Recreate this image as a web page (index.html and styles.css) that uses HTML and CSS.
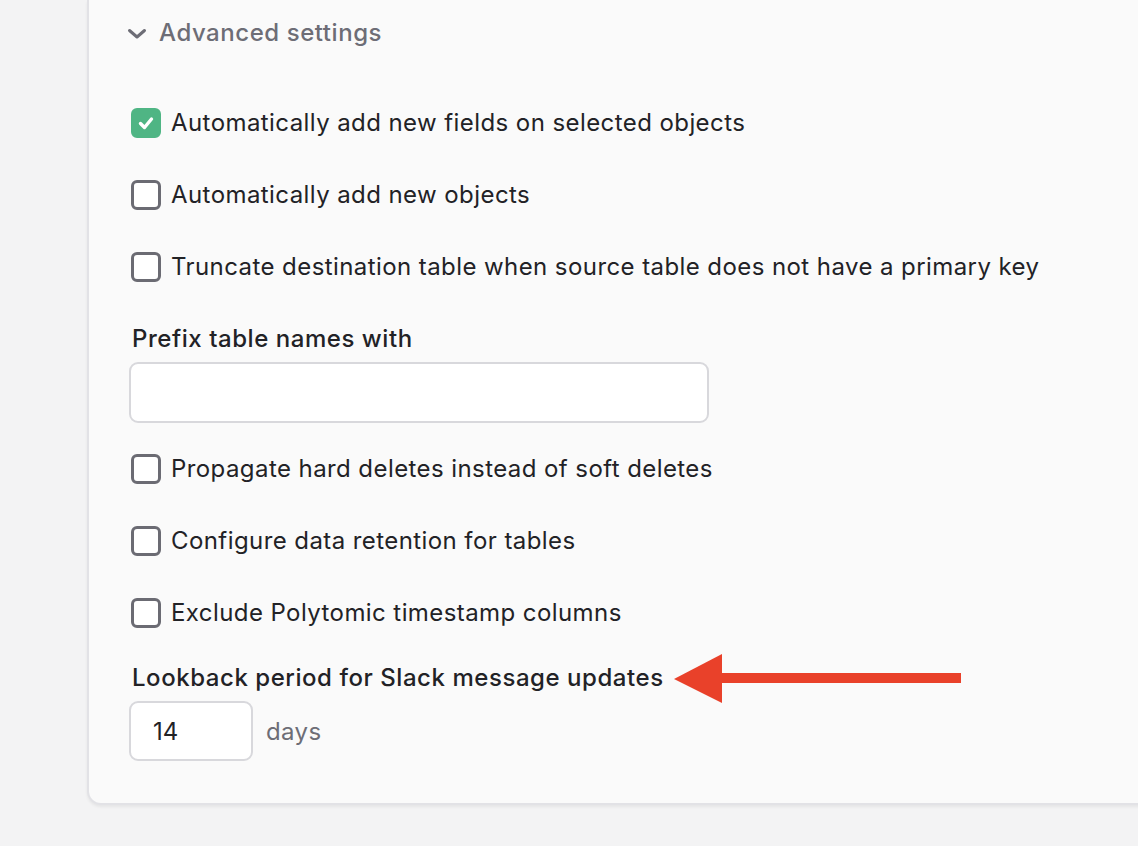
FILE: index.html
```html
<!DOCTYPE html>
<html lang="en">

<head>
    <meta charset="UTF-8" />
    <meta name="viewport" content="width=device-width, initial-scale=1.0" />
    <title>Advanced settings</title>
    <link rel="stylesheet" href="styles.css">
</head>

<body>
    <div class="panel">
        <button class="toggle">
            <svg class="chevron" width="20" height="12" viewBox="0 0 20 12">
                <path d="M2.5 2.5 L10 9 L17.5 2.5" fill="none" stroke="currentColor" stroke-width="3" stroke-linecap="round" stroke-linejoin="round" />
            </svg>
            <span>Advanced settings</span>
        </button>

        <div class="options">
            <label class="check">
                <span class="box checked">
                    <svg width="20" height="20" viewBox="0 0 20 20">
                        <path d="M4.5 10.5 L8.5 14.5 L15.5 6" fill="none" stroke="#fff" stroke-width="3.4" stroke-linecap="round" stroke-linejoin="round" />
                    </svg>
                </span>
                Automatically add new fields on selected objects
            </label>
            <label class="check"><span class="box"></span>Automatically add new objects</label>
            <label class="check"><span class="box"></span>Truncate destination table when source table does not have a primary key</label>

            <div class="field">
                <div class="field-label">Prefix table names with</div>
                <input class="text-input wide" type="text" />
            </div>

            <label class="check"><span class="box"></span>Propagate hard deletes instead of soft deletes</label>
            <label class="check"><span class="box"></span>Configure data retention for tables</label>
            <label class="check"><span class="box"></span>Exclude Polytomic timestamp columns</label>

            <div class="field lookback">
                <div class="field-label">Lookback period for Slack message updates</div>
                <div class="inline">
                    <input class="text-input short" type="text" value="14" />
                    <span class="unit">days</span>
                </div>
            </div>
        </div>
    </div>

    <!-- annotation arrow -->
    <svg class="arrow" width="300" height="60" viewBox="0 0 300 60">
        <polygon points="1,25 49,0 49,49" fill="#e9412a" />
        <rect x="47" y="19" width="241" height="10" fill="#e9412a" />
    </svg>
</body>

</html>
```

FILE: styles.css
```css
body {
    margin: 0;
    background: #f3f3f4;
    font-family: Inter, 'Noto Sans', sans-serif;
    color: #222226;
    overflow: hidden;
    height: 846px;
    position: relative;
}

.panel {
    margin-left: 87px;
    margin-right: -20px;
    background: #fafafa;
    border: 2px solid #e2e2e6;
    border-top: none;
    border-radius: 0 0 0 14px;
    padding: 15px 0 50px 40px;
    box-shadow: 0 2px 3px rgba(0, 0, 0, 0.06);
}

.toggle {
    display: flex;
    align-items: center;
    gap: 12px;
    background: none;
    border: none;
    padding: 0;
    margin-left: -2px;
    font-family: inherit;
    font-size: 24px;
    font-weight: 500;
    letter-spacing: 0.55px;
    line-height: 36px;
    color: #6d6d76;
}

.chevron {
    margin-top: 1px;
}

.options {
    display: flex;
    flex-direction: column;
    gap: 36px;
    margin-top: 54px;
}

.check {
    display: flex;
    align-items: center;
    gap: 10px;
    font-size: 24px;
    letter-spacing: 0.42px;
    line-height: 36px;
    margin-left: 2px;
}

.box {
    width: 24px;
    height: 24px;
    border: 3px solid #6b6b73;
    border-radius: 6px;
    display: flex;
    align-items: center;
    justify-content: center;
    background: #fff;
}

.box.checked {
    background: #4fb584;
    border-color: #4fb584;
}

.field-label {
    font-size: 24px;
    font-weight: 500;
    letter-spacing: 0.55px;
    line-height: 36px;
    margin-left: 3px;
}

.field .text-input {
    margin-top: 5px;
}

.field {
    margin-bottom: -8px;
}

.field.lookback {
    margin-top: -7px;
}

.text-input {
    display: block;
    box-sizing: border-box;
    height: 61px;
    border: 2px solid #d8d8dc;
    border-radius: 9px;
    background: #fff;
    font-family: inherit;
    font-size: 24px;
    color: #222226;
    padding: 0 22px;
    outline: none;
}

.wide {
    width: 580px;
}

.inline {
    display: flex;
    align-items: center;
    gap: 13px;
}

.short {
    width: 124px;
    height: 60px;
}

.unit {
    font-size: 24px;
    letter-spacing: 0.4px;
    color: #6d6d76;
    margin-top: 5px;
}

.arrow {
    position: absolute;
    left: 673px;
    top: 654px;
}
```
